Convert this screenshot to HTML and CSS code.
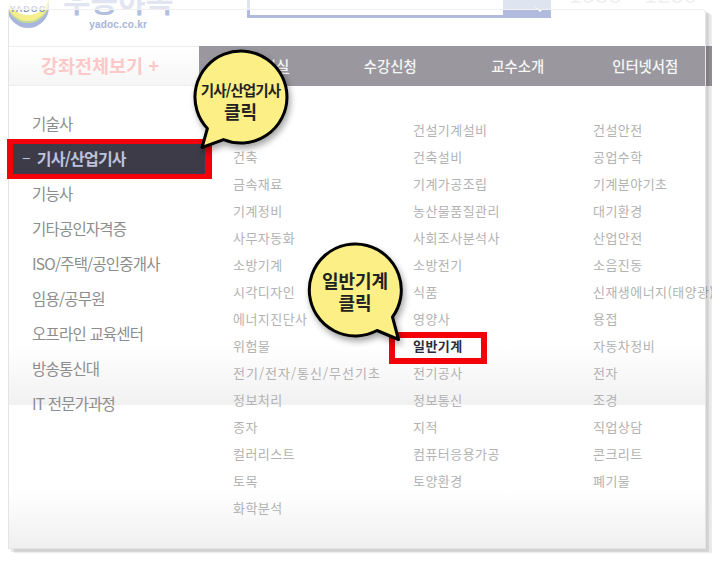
FILE: index.html
```html
<!DOCTYPE html>
<html lang="ko">
<head>
<meta charset="utf-8">
<title>강좌전체보기</title>
<link rel="stylesheet" href="styles.css">
</head>
<body>
<div class="page">
  <header class="header">
    <div class="logo">
      <svg class="logo-mark" width="42" height="30" viewBox="0 0 42 30">
        <circle cx="20" cy="9" r="21" fill="#aab5dc"/>
        <circle cx="20" cy="4" r="21" fill="#c6dc9c"/>
        <circle cx="20" cy="2" r="21" fill="#f4ee8c"/>
        <circle cx="20" cy="-4" r="21" fill="#fff"/>
        <text class="logo-mark-text" x="20" y="14" text-anchor="middle">YADOC</text>
      </svg>
      <div class="logo-words">
        <span class="logo-name">우등야독</span>
        <span class="logo-url">yadoc.co.kr</span>
      </div>
    </div>
    <div class="search">
      <div class="search-input"></div>
      <div class="search-btn">
        <svg width="18" height="18" viewBox="0 0 18 18"><path d="M4 6l6 4 3-1-3 3z" fill="#fff"/></svg>
      </div>
    </div>
    <div class="phone">1588 - 1230</div>
  </header>

  <nav class="nav">
    <div class="nav-all">강좌전체보기 +</div>
    <ul class="nav-items">
      <li class="nav-item nav-item-on">내강의실</li>
      <li class="nav-item">수강신청</li>
      <li class="nav-item">교수소개</li>
      <li class="nav-item">인터넷서점</li>
    </ul>
  </nav>

  <main class="panel">
    <ul class="cats">
      <li class="cat">기술사</li>
      <li class="cat cat-on"><span class="cat-dash">–</span>기사/산업기사</li>
      <li class="cat">기능사</li>
      <li class="cat">기타공인자격증</li>
      <li class="cat">ISO/주택/공인중개사</li>
      <li class="cat">임용/공무원</li>
      <li class="cat">오프라인 교육센터</li>
      <li class="cat">방송통신대</li>
      <li class="cat">IT 전문가과정</li>
    </ul>
    <div class="subs">
      <ul class="sub-col">
        <li>가스</li><li>건축</li><li>금속재료</li><li>기계정비</li><li>사무자동화</li><li>소방기계</li><li>시각디자인</li><li>에너지진단사</li><li>위험물</li><li class="sub-wide">전기/전자/통신/무선기초</li><li>정보처리</li><li>종자</li><li>컬러리스트</li><li>토목</li><li>화학분석</li>
      </ul>
      <ul class="sub-col">
        <li>건설기계설비</li><li>건축설비</li><li>기계가공조립</li><li>농산물품질관리</li><li>사회조사분석사</li><li>소방전기</li><li>식품</li><li>영양사</li><li class="sub-on">일반기계</li><li>전기공사</li><li>정보통신</li><li>지적</li><li>컴퓨터응용가공</li><li>토양환경</li>
      </ul>
      <ul class="sub-col">
        <li>건설안전</li><li>공업수학</li><li>기계분야기초</li><li>대기환경</li><li>산업안전</li><li>소음진동</li><li>신재생에너지(태양광)</li><li>용접</li><li>자동차정비</li><li>전자</li><li>조경</li><li>직업상담</li><li>콘크리트</li><li>폐기물</li>
      </ul>
    </div>
  </main>
</div>

<div class="frame"></div>
<div class="top-fade"></div>

<div class="mark mark-cat"></div>
<div class="mark mark-sub"></div>

<div class="callout callout-a">
  <svg class="callout-shape" width="110" height="110" viewBox="0 0 110 110">
    <path d="M12.4 83.5 A46 46 0 1 1 28.5 94.6 L7 102.5 Z" class="bubble"/>
  </svg>
  <p class="callout-text"><span class="callout-sm">기사/산업기사</span><span class="callout-lg">클릭</span></p>
</div>
<div class="callout callout-b">
  <svg class="callout-shape" width="110" height="110" viewBox="0 0 110 110">
    <path d="M71 91.5 A46 46 0 1 1 86.5 78 L92.5 100.5 Z" class="bubble"/>
  </svg>
  <p class="callout-text"><span class="callout-lg">일반기계</span><span class="callout-lg">클릭</span></p>
</div>
</body>
</html>
```

FILE: styles.css
```css
* { box-sizing: border-box; }
html, body { margin: 0; padding: 0; background: #fff; }
body {
  position: relative;
  width: 718px;
  height: 579px;
  overflow: hidden;
  font-family: "Noto Sans CJK KR", "Noto Sans", sans-serif;
}
ul { list-style: none; margin: 0; padding: 0; }
p { margin: 0; }

.page { width: 703px; height: 548px; margin-left: 9px; }

/* header, cut off by the top of the picture */
.header {
  display: flex;
  align-items: flex-start;
  height: 46px;
  overflow: hidden;
}
.logo { display: flex; width: 239px; margin-left: -1px; flex: none; }
.logo-mark { flex: none; display: block; margin-top: -2px; }
.logo-mark-text { font: 700 9px "Liberation Sans", sans-serif; fill: #8b95bd; letter-spacing: 1px; }
.logo-words { display: flex; flex-direction: column; align-items: flex-end; width: 84px; margin-left: 13px; }
.logo-name {
  align-self: flex-start;
  font-size: 30px;
  font-weight: 700;
  line-height: 30px;
  margin-top: -16px;
  color: #b4bfdf;
  white-space: nowrap;
}
.logo-url {
  font: 700 10px/10px "Liberation Sans", sans-serif;
  color: #a9b5d9;
  letter-spacing: .2px;
  margin-top: 6px;
}
.search {
  display: flex;
  width: 304px;
  height: 18px;
  flex: none;
  background: #b0bbdd;
}
.search-input { width: 253px; height: 15px; margin-left: 3px; background: #fff; }
.search-btn { flex: 1; padding: 0 0 0 27px; overflow: hidden; }
.search-btn svg { display: block; }
.phone {
  margin: -17px 0 0 18px;
  font: 400 22px/26px "Liberation Sans", sans-serif;
  color: #d9d9d9;
  letter-spacing: 1px;
  white-space: nowrap;
}

/* nav */
.nav { display: flex; height: 40px; }
.nav-all {
  width: 190px;
  flex: none;
  padding-right: 8px;
  border-top: 1px solid #eee;
  border-bottom: 1px solid #eee;
  background: linear-gradient(to bottom, #fff, #f6f6f6);
  color: #fdc8c8;
  font-size: 18.5px;
  font-weight: 700;
  line-height: 37px;
  text-align: center;
}
.nav-items {
  flex: 1;
  display: grid;
  grid-template-columns: repeat(4, 127.5px);
  background: #9a989e;
}
.nav-item {
  color: #f6f6f6;
  font-size: 14.4px;
  font-weight: 500;
  line-height: 39px;
  text-align: center;
}
.nav-item-on { text-decoration: underline; }

/* panel */
.panel {
  position: relative;
  display: flex;
  height: 462px;
  background: linear-gradient(to bottom, #fff 0, #fff 404px, #f0f0f0 462px) left top / 697px 462px no-repeat;
}
.panel::before {
  content: "";
  position: absolute;
  left: 0; top: 260px;
  width: 697px; height: 59px;
  background: linear-gradient(to bottom, #fff, #f1f1f1);
}
.cats { position: relative; width: 224px; flex: none; padding-top: 20px; }
.cat {
  height: 35px;
  padding-left: 23px;
  color: #8d8d8d;
  font-size: 15.5px;
  line-height: 35px;
  letter-spacing: -.8px;
  white-space: nowrap;
}
.cat-on {
  height: 30px;
  width: 192px;
  margin: 2.5px 0 2.5px 4px;
  padding-left: 9px;
  background: #3e3b49;
  color: #bcc2dc;
  font-weight: 700;
  font-size: 16px;
  line-height: 29px;
}
.cat-dash { margin-right: 7px; font-weight: 400; }
.subs {
  position: relative;
  flex: 1;
  min-width: 0;
  display: grid;
  grid-template-columns: 180px 180px 180px;
  padding-top: 30px;
  overflow: hidden;
}
.sub-col li {
  height: 27px;
  color: #b2b2b2;
  font-size: 13px;
  line-height: 27px;
  letter-spacing: .45px;
  white-space: nowrap;
}
.sub-col .sub-wide { letter-spacing: 1px; }
.sub-col .sub-on { color: #2b2a3a; font-weight: 700; }

/* picture frame drawn on top */
.frame {
  position: absolute;
  left: 8px; top: 9px;
  width: 698px; height: 540px;
  border: 1px solid #e4e4e4;
  border-top-color: #f0f0f0;
  border-top-right-radius: 4px;
  box-shadow: 2px 2px 0 rgba(0,0,0,.02), 3px 3px 0 rgba(0,0,0,.07), 5px 3px 0 rgba(0,0,0,.02), 6px 4px 0 rgba(0,0,0,.07);
}
.top-fade {
  position: absolute;
  left: 0; top: 0;
  width: 718px; height: 9px;
  background: rgba(255,255,255,.6);
}

/* red marks */
.mark { position: absolute; border: 6px solid #f30009; }
.mark-cat { left: 7px; top: 139px; width: 205px; height: 40px; border-width: 5px 7px 5px 6px; }
.mark-sub { left: 389px; top: 332px; width: 98px; height: 32px; }

/* bubbles */
.callout { position: absolute; width: 110px; height: 110px; }
.callout-a { left: 195px; top: 45px; }
.callout-b { left: 305.5px; top: 239px; }
.callout-shape { display: block; overflow: visible; }
.bubble {
  fill: #fbef85;
  stroke: #000;
  stroke-width: 3px;
  stroke-linejoin: round;
  filter: drop-shadow(2px 4px 3px rgba(0,0,0,.35));
}
.callout-text {
  position: absolute;
  left: 0; top: 0;
  display: flex;
  flex-direction: column;
  align-items: center;
  color: #222;
  font-weight: 700;
  white-space: nowrap;
}
.callout-a .callout-text { width: 91px; padding-top: 35px; }
.callout-b .callout-text { width: 99px; padding-top: 30px; }
.callout-sm { font-size: 14.5px; line-height: 20px; letter-spacing: -.9px; }
.callout-lg { font-size: 18px; line-height: 22px; }
```
